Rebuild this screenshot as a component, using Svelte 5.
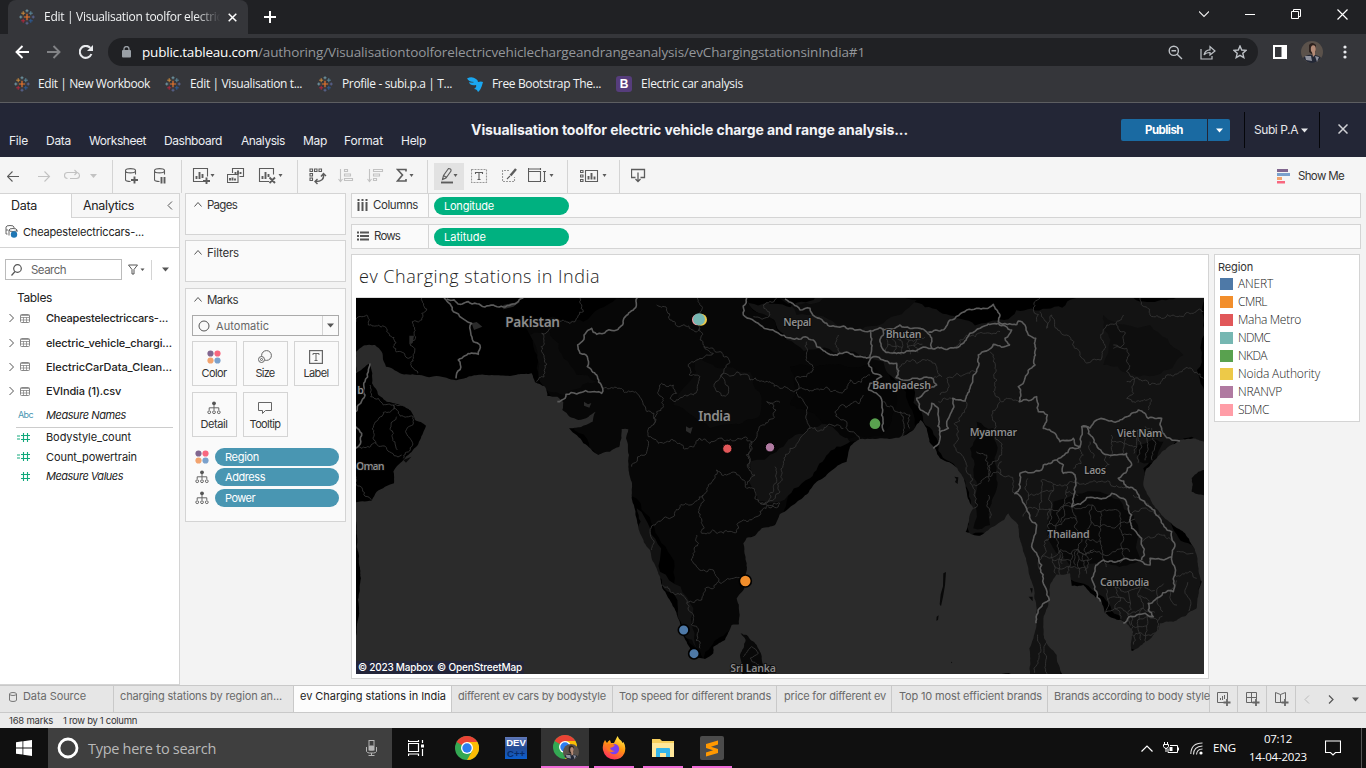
<script>
  // Spreads a label over the width of its slot by adjusting the tracking.
  function fit(node, width) {
    if (!width) return;
    const natural = node.getBoundingClientRect().width;
    const n = node.textContent.length;
    node.style.letterSpacing = `${(width - natural) / n}px`;
  }

  const bookmarks = [
    { icon: 'tableau', text: 'Edit | New Workbook', w: 112 },
    { icon: 'tableau', text: 'Edit | Visualisation t...', w: 112 },
    { icon: 'tableau', text: 'Profile - subi.p.a | T...', w: 110 },
    { icon: 'bird', text: 'Free Bootstrap The...', w: 109 },
    { icon: 'boot', text: 'Electric car analysis', w: 102 }
  ];
  const menus = [['File', 19], ['Data', 25], ['Worksheet', 57], ['Dashboard', 58], ['Analysis', 44], ['Map', 24], ['Format', 39], ['Help', 25]];
  const tables = [['Cheapestelectriccars-...', 122], ['electric_vehicle_chargi...', 126], ['ElectricCarData_Clean...', 126], ['EVIndia (1).csv', 75]];
  const legend = [
    ['ANERT', '#4e79a7', 35], ['CMRL', '#f28e2b', 29], ['Maha Metro', '#e15759', 63], ['NDMC', '#76b7b2', 32],
    ['NKDA', '#59a14f', 29], ['Noida Authority', '#edc948', 82], ['NRANVP', '#b07aa1', 44], ['SDMC', '#ff9da7', 31]
  ];
  const sheets = [
    ['charging stations by region an...', 162], ['ev Charging stations in India', 146, true], ['different ev cars by bodystyle', 148],
    ['Top speed for different brands', 152], ['price for different ev', 102], ['Top 10 most efficient brands', 143], ['Brands according to body style', 156]
  ];

  // Midpoint displacement turns sparse points into a natural looking line.
  function rough(str, amp = 0.16, step = 14, close = false) {
    const p = str.trim().split(/\s+/).map((s) => s.split(',').map(Number));
    if (close) p.push(p[0]);
    let seed = Math.abs(p[0][0] * 31 + p[0][1] * 17 + p.length * 101) + 7;
    const rnd = () => { seed = (seed * 16807) % 2147483647; return seed / 2147483647 - 0.5; };
    for (let i = 0; i < 5; i++) rnd();
    const out = [p[0]];
    const div = (a, b) => {
      const dx = b[0] - a[0], dy = b[1] - a[1];
      if (Math.hypot(dx, dy) < step) { out.push(b); return; }
      const k = rnd() * amp * 2;
      const m = [(a[0] + b[0]) / 2 - dy * k, (a[1] + b[1]) / 2 + dx * k];
      div(a, m); div(m, b);
    };
    for (let i = 1; i < p.length; i++) div(p[i - 1], p[i]);
    return 'M' + out.map((q) => q[0].toFixed(1) + ' ' + q[1].toFixed(1)).join('L') + (close ? 'Z' : '');
  }

  // Map geometry, three units to a pixel.
  const arabianAndBay = '18,170 40,152 75,150 95,170 108,215 150,235 200,240 260,243 318,256 350,248 425,240 480,243 545,235 555,262 585,275 592,303 622,305 640,322 637,345 660,366 685,375 715,366 737,350 728,380 690,397 657,400 700,445 745,480 780,470 808,455 815,402 835,403 828,430 837,480 835,515 845,560 845,600 858,665 870,715 900,765 915,810 930,845 937,880 965,925 990,985 1010,1040 1025,1080 1065,1092 1090,1075 1090,1055 1125,1035 1145,990 1167,988 1160,910 1183,880 1185,780 1180,745 1190,728 1215,722 1235,700 1275,690 1290,657 1340,622 1400,560 1440,530 1490,500 1500,455 1530,432 1590,430 1645,428 1690,405 1712,375 1730,400 1738,440 1770,490 1822,520 1838,545 1850,590 1870,640 1858,665 1847,710 1890,722 1920,700 1962,675 1975,655 2005,690 2018,760 2035,820 2052,880 2060,940 2058,1000 2038,1060 2040,1140 10,1140 10,625 65,617 80,590 105,575 132,565 130,530 160,495 180,475 210,435 228,392 195,375 180,345 110,320 85,300 66,265 60,205 18,235';
  const gulf = '2138,1140 2120,1080 2082,1030 2080,985 2095,930 2100,870 2120,838 2160,835 2165,872 2200,870 2230,900 2255,920 2265,955 2290,970 2330,985 2350,1010 2345,1068 2380,1045 2425,1005 2430,985 2470,980 2540,940 2555,860 2540,780 2505,715 2440,665 2400,610 2380,570 2390,520 2420,490 2455,455 2490,435 2530,430 2570,440 2570,1140';
  const shades = [
    ['1180,10 2570,10 2570,440 2480,435 2380,520 2440,660 2560,800 2540,960 2340,1060 2250,900 2150,840 2130,1137 2040,1137 1990,700 1860,720 1830,540 1720,380 1690,260 1500,200 1330,170', '#131313'],
    ['520,90 700,80 800,10 1180,10 1600,200 1700,400 1500,440 1290,670 1190,730 1180,980 1060,1092 1000,1010 830,520 740,480 600,300 560,220', '#070707'],
    ['860,640 900,700 930,830 1030,940 1040,1060 1000,1020 920,830 865,720', '#121212'],
    ['540,120 600,110 640,190 740,260 640,300 570,260', '#0b0b0b'],
    ['1200,500 1280,470 1450,380 1500,440 1380,550 1290,620 1220,620', '#121212'],
    ['1880,380 1930,400 1940,520 1920,690 1870,700 1880,560 1860,460', '#070707'],
    ['2110,620 2250,590 2350,660 2370,790 2200,820 2110,760', '#080808'],
    ['2360,450 2440,440 2420,500 2370,500', '#070707'],
    ['1320,215 1560,210 1640,300 1600,420 1470,420 1320,330', '#050505'],
    ['1040,190 1200,230 1230,360 1080,400 970,330', '#0b0b0b'],
    ['2260,60 2400,90 2500,180 2420,240 2260,210', '#0e0e0e'],
    ['1290,10 1500,10 1700,15 1600,85 1460,90 1340,60', '#0b0b0b']
  ];
  const major = [
    '282,9 310,50 365,85 370,140 390,150 385,178 345,182 325,195 318,250', '290,12 330,28 430,30 520,9',
    '862,9 850,45 820,75 800,105 740,118 725,100 710,110 683,150 690,175 712,185 712,215 740,240 758,280 755,295 735,290 680,297 648,298 645,310 622,320',
    '1190,9 1180,60 1230,90 1290,118 1340,130 1390,135 1400,155 1470,175 1520,185 1560,188 1563,140 1560,105',
    '1305,12 1350,45 1380,40 1395,65 1420,80 1460,95 1500,100 1560,108 1590,98 1600,105',
    '1600,100 1590,140 1600,165 1680,168 1745,160 1740,120 1710,100 1650,90 1600,105',
    '1735,112 1770,108 1800,75 1850,45 1880,40 1930,28 1950,60 1945,80 2000,90',
    '1745,160 1820,158 1850,130 1905,92 1945,85 1985,105 1965,130 1980,150',
    '2000,90 2005,78 2025,90 2035,120 2057,130 2055,210 2025,250 2005,275 2008,320 2060,305 2065,350 2092,360 2080,400 2115,415 2130,440 2170,430 2175,450 2190,455 2195,395 2220,400',
    '1980,150 1930,148 1885,180 1880,230 1860,280 1845,318 1808,310 1805,350 1795,400 1770,410 1765,340 1745,325 1735,360 1712,345 1700,310 1725,290 1760,270 1750,252 1638,248 1640,205 1600,195 1570,185 1555,205 1570,235 1595,245 1560,265 1556,285 1585,300 1595,360 1602,410',
    '1770,410 1768,440 1750,460',
    '2220,400 2240,375 2290,380 2330,365 2365,345 2395,370 2435,370 2435,405 2460,430 2490,438',
    '2195,395 2210,395 2230,430 2255,470 2300,480 2330,475 2345,510 2305,550 2360,590 2390,630 2430,670 2465,710 2475,750 2465,785 2400,790 2400,810 2340,795 2260,795 2235,820 2225,850 2240,890 2252,920',
    '2465,785 2475,840 2470,890 2415,915 2395,925 2395,945 2410,965 2360,960 2320,985',
    '2190,455 2160,460 2120,495 2080,510 2075,525 2010,535 2010,580 1995,595 2030,640 2060,690 2045,755 2075,810 2080,850 2098,915 2060,960 2058,985',
    '2120,495 2140,510 2140,535 2175,540 2175,590 2165,635 2210,608 2260,610 2285,595 2320,610 2345,660 2345,700 2375,730 2375,795',
    '60,205 55,230 45,260 45,300 25,330 18,350', '18,395 35,415 18,460'
  ];
  const minor = [
    '215,9 215,75 187,80 180,150 190,190 203,235', '18,80 50,60 55,90 110,110 130,155 185,185', '690,9 700,50 675,80 620,75 575,115 575,170 585,220 560,260',
    '920,30 950,40 960,75 990,95 1035,110 1050,100', '1042,9 1045,60', '1045,90 1060,150 1110,170 1135,190 1125,220 1110,250 1095,265 1100,290 1130,300 1125,260 1115,238 1200,255 1260,260 1290,280',
    '1060,155 1090,175 1050,190 1015,215 1018,240 1050,245 1045,265 1030,300 1000,305 975,320 960,310 980,295 970,270 935,265 940,310 920,350 910,390 895,425',
    '758,280 800,278 850,290 880,330 912,355 910,390', '895,425 940,445 990,445 1000,460 1050,430 1080,445 1120,435 1205,440', '890,435 885,480 850,505 845,515',
    '1290,322 1250,320 1278,345 1255,380 1228,395 1210,440 1195,520 1215,540 1190,570', '1205,440 1200,520', '1100,525 1095,550 1075,570 1060,600 1020,630 975,650 910,690 905,730 905,765', '1098,525 1130,540 1170,545 1190,580 1215,590 1230,625 1255,620 1290,590', '1275,515 1280,560 1260,610 1230,625 1290,625',
    '1060,600 1055,715 1120,715 1180,675 1230,660 1290,625', '1040,720 1035,770 1028,800 1045,820 1090,825 1105,850 1100,865 1060,895 1055,915 1010,925 960,890 937,870', '1105,860 1150,850 1185,845', '1010,925 1030,960 1045,1010 1050,1060',
    '1280,10 1240,30 1260,60 1210,65', '78,445 92,365 130,330 190,365 180,430 160,490', '18,455 78,445 155,480', '140,365 142,465', '18,545 65,615', '60,270 62,305 100,330 130,330 180,345',
    '1370,140 1375,200 1390,225 1340,245 1340,285 1290,280', '1470,175 1465,120', '1340,285 1460,290 1500,255 1560,240', '1340,290 1370,350 1380,400 1350,430 1320,460 1300,500 1290,590', '1540,300 1500,330 1455,350 1490,380 1500,410 1530,435', '1380,400 1430,395 1480,400',
    '1640,248 1650,215 1700,205 1760,215 1775,245 1745,252', '1600,320 1640,350 1650,430', '1650,350 1680,360 1680,400', '1770,300 1790,290 1790,250 1820,235 1850,235 1880,230', '1765,320 1805,310', '1820,160 1850,120 1900,115 1950,110',
    '1845,318 1835,360 1835,480 1870,580 1870,640', '1920,170 1935,220 1930,290 1960,320 2008,320', '1950,320 1925,360 1935,400 1955,480 1920,510 1915,560', '1880,470 1910,480 1920,545 1955,540 1995,600', '1870,570 1915,545', '1915,600 1920,670', '1955,500 1955,540',
    '2070,9 2060,80', '2070,50 2090,100 2105,60 2150,120 2180,160 2205,200 2250,195 2260,140 2300,80 2320,60', '2370,9 2400,60 2440,70 2500,65 2560,50', '2290,150 2330,160 2330,230 2350,270 2330,310 2400,310 2395,345', '2330,260 2400,270 2450,240 2560,250', '2300,85 2320,150 2290,160',
    '2230,490 2220,440', '2265,475 2260,540', '2170,520 2200,480 2190,455', '2180,560 2250,560 2330,580', '2345,655 2430,660', '2375,740 2465,735', '2480,770 2530,775', '2470,840 2540,850', '2400,640 2350,600'
  ];
  const provinces = (() => {
    // Irregular cells for the small provinces of Thailand, Cambodia and Viet Nam.
    const out = [];
    const cells = (x0, y0, x1, y1, s) => {
      for (let y = y0; y < y1; y += s) for (let x = x0; x < x1; x += s) {
        const j = Math.sin(x * 12.9 + y * 7.3) * s * 0.28, k = Math.cos(x * 5.1 + y * 3.7) * s * 0.28;
        const j2 = Math.sin((x + s) * 12.9 + y * 7.3) * s * 0.28, k2 = Math.cos((x + s) * 5.1 + y * 3.7) * s * 0.28;
        const j3 = Math.sin(x * 12.9 + (y + s) * 7.3) * s * 0.28, k3 = Math.cos(x * 5.1 + (y + s) * 3.7) * s * 0.28;
        if ((x + y * 3) % 5 !== 0) out.push(`${x + j},${y + k} ${x + s + j2},${y + k2}`);
        out.push(`${x + j},${y + k} ${x + j3},${y + s + k3}`);
      }
    };
    cells(2025, 560, 2150, 640, 38); cells(2085, 640, 2340, 780, 44); cells(2110, 770, 2220, 820, 24);
    cells(2270, 880, 2400, 950, 34); cells(2345, 970, 2420, 1040, 24); cells(2430, 860, 2520, 930, 40);
    cells(2370, 400, 2420, 500, 20); cells(1610, 130, 1720, 158, 22); cells(2275, 410, 2380, 470, 38); cells(2060, 1020, 2110, 1120, 30);
    cells(1190, 1060, 1235, 1120, 26);
    return out;
  })();
  const labels = [
    ['Pakistan', 466, 95, 164, 41], ['India', 1045, 379, 97, 41], ['Nepal', 1300, 93, 84, 32], ['Bhutan', 1607, 129, 108, 32], ['Bangladesh', 1567, 282, 176, 32],
    ['Myanmar', 1859, 424, 142, 32], ['Viet Nam', 2301, 427, 136, 32], ['Laos', 2202, 536, 66, 32], ['Thailand', 2092, 729, 127, 32], ['Cambodia', 2250, 874, 148, 32],
    ['Oman', 18, 524, 86, 32], ['b', 22, 297, 17, 32], ['Sri Lanka', 1141, 1132, 137, 32]
  ];
  const marks = [
    [1043, 74, 17, '#ff9da7', 0], [1053, 74, 18, '#edc948', 0], [1047, 73, 18, '#76b7b2', 0], [1132, 461, 14, '#e15759', 3], [1260, 457, 14, '#b07aa1', 3],
    [1575, 386, 16, '#59a14f', 0], [1186, 858, 18, '#f28e2b', 5], [1001, 1005, 16, '#4e79a7', 5], [1032, 1076, 16, '#4e79a7', 5]
  ];
</script>

{#snippet t(text, w, cls = '')}<span class="t {cls}" use:fit={w}>{text}</span>{/snippet}

{#snippet tableau()}
  <svg width="16" height="16" viewBox="0 0 16 16" fill="none" stroke-width="1">
    <path d="M8 4.800v6.400M4.800 8h6.400" stroke="#e8762d" stroke-width="1.200" /><path d="M4.200 2.200v4M2.200 4.200h4" stroke="#c98a3c" /><path d="M11.800 2.200v4M9.800 4.200h4" stroke="#59879b" />
    <path d="M4.200 9.800v4M2.200 11.800h4" stroke="#b0283c" /><path d="M11.800 9.800v4M9.800 11.800h4" stroke="#2c5a96" /><path d="M8 .3v3M6.500 1.800h3M1.800 6.500v3M.3 8h3" stroke="#7199a6" /><path d="M8 12.700v3M6.500 14.200h3M14.200 6.500v3M12.700 8h3" stroke="#5b6591" />
  </svg>
{/snippet}

{#snippet dots()}
  <svg width="14" height="14" viewBox="0 0 14 14"><circle cx="3.500" cy="3.500" r="3.100" fill="#81668f" /><circle cx="10.500" cy="3.500" r="3.100" fill="#f8677f" /><circle cx="3.500" cy="10.500" r="3.100" fill="#f2a36e" /><circle cx="10.500" cy="10.500" r="3.100" fill="#7ba1cc" /></svg>
{/snippet}

{#snippet tree()}
  <svg width="14" height="14" viewBox="0 0 14 14" fill="none" stroke="#666"><circle cx="7" cy="2.300" r="1.900" fill="#555" stroke="none" /><path d="M7 4v5M2.200 9V6.800h9.600V9" /><circle cx="2.200" cy="11.200" r="1.400" /><circle cx="7" cy="11.200" r="1.400" /><circle cx="11.800" cy="11.200" r="1.400" /></svg>
{/snippet}

{#snippet chrome()}
  <svg width="24" height="24" viewBox="0 0 24 24"><circle cx="12" cy="12" r="12" fill="#34a853" /><path d="M12 12L1.600 6A12 12 0 0 1 22.400 6z" fill="#ea4335" /><path d="M12 6h10.400A12 12 0 0 1 12 24l5.200-9z" fill="#fbbc05" /><circle cx="12" cy="12" r="6" fill="#fff" /><circle cx="12" cy="12" r="4.700" fill="#2c7df0" /></svg>
{/snippet}

{#snippet portrait(s)}
  <svg width={s} height={s} viewBox="0 0 22 22"><circle cx="11" cy="11" r="11" fill="#5b524b" /><path d="M2 17q5-4 8-3l4 0q5 1 6 3q-4 5-9 5t-9-5" fill="#232836" /><path d="M4 15l6 0 1 5-6-1zM14 15l4 1-2 5z" fill="#8f919c" /><path d="M8 11V4q3-4 7 0v6l-3 4z" fill="#2c211e" /><ellipse cx="12.300" cy="8" rx="2.500" ry="3.800" fill="#b48b77" /><path d="M11 11h3v3l-2 2z" fill="#b48b77" /></svg>
{/snippet}

{#snippet caret()}<svg class="caret" width="7" height="5" viewBox="0 0 7 5"><path d="M0 .5h7L3.500 4.500z" /></svg>{/snippet}

<div class="app">
  <div class="strip">
    <div class="tab">
      {@render tableau()}
      <div class="tabtext">{@render t('Edit | Visualisation toolfor electric', 178, 'chr')}</div>
      <svg width="9" height="9" viewBox="0 0 9 9" stroke="#fff" stroke-width="1.500"><path d="M.7.7l7.600 7.600M8.300.7L.7 8.300" /></svg>
    </div>
    <svg class="plus" width="12" height="12" viewBox="0 0 12 12" stroke="#fff" stroke-width="2"><path d="M6 0v12M0 6h12" /></svg>
    <div class="winbtns">
      <svg width="10" height="10" viewBox="0 0 10 10" fill="none" stroke="#eee" stroke-width="1.100"><path d="M0 2.500l5 5 5-5" /></svg>
      <svg width="10" height="10" viewBox="0 0 10 10" stroke="#fff"><path d="M0 5.500h10" /></svg>
      <svg width="10" height="10" viewBox="0 0 10 10" fill="none" stroke="#fff"><path d="M.5 2.500h7v7h-7zM2.500 2.500v-2h7v7h-2" /></svg>
      <svg width="11" height="11" viewBox="0 0 11 11" stroke="#fff" stroke-width="1.200"><path d="M.5.5l10 10M10.500.5l-10 10" /></svg>
    </div>
  </div>

  <div class="nav">
    <svg width="14" height="14" viewBox="0 0 14 14" fill="none" stroke="#fff" stroke-width="1.900"><path d="M14 7H1.500M7.500 1L1.500 7l6 6" /></svg>
    <svg width="14" height="14" viewBox="0 0 14 14" fill="none" stroke="#828386" stroke-width="1.900"><path d="M0 7h12.500M6.500 1l6 6-6 6" /></svg>
    <svg width="14" height="14" viewBox="0 0 14 14" fill="none" stroke="#e8eaed" stroke-width="2.100"><path d="M12.400 9A6 6 0 1 1 11.300 2.900" /><path d="M14 0v6H8z" fill="#e8eaed" stroke="none" /></svg>
    <div class="omni">
      <svg width="9" height="12" viewBox="0 0 9 12"><path d="M2 5V3a2.500 2.500 0 0 1 5 0v2" fill="none" stroke="#9aa0a6" stroke-width="1.300" /><rect y="4" width="9" height="7.500" rx="1" fill="#9aa0a6" /></svg>
      <div class="url">{@render t('public.tableau.com', 116, 'host')}{@render t('/authoring/Visualisationtoolforelectricvehiclechargeandrangeanalysis/evChargingstationsinIndia#1', 607, 'path')}</div>
      <div class="omniicons">
        <svg width="15" height="15" viewBox="0 0 15 15" fill="none" stroke="#bdc1c6" stroke-width="1.400"><circle cx="5.800" cy="5.800" r="4.600" /><path d="M3.500 5.800h4.600M9.200 9.200l4.800 4.800" /></svg>
        <svg width="16" height="15" viewBox="0 0 16 15" fill="none" stroke="#bdc1c6" stroke-width="1.200"><path d="M1 4v10h11v-3M4 10q1-5 6-5.200V1.500l5 4.500-5 4V7.500Q6 7.500 4 10z" /></svg>
        <svg width="14" height="14" viewBox="0 0 14 14" fill="none" stroke="#bdc1c6" stroke-width="1.400"><path d="M7 1l1.700 4 4.400.4-3.300 2.900 1 4.300L7 10.300l-3.800 2.300 1-4.300L.9 5.400 5.300 5z" /></svg>
      </div>
    </div>
    <div class="exticons">
      <svg width="14" height="14" viewBox="0 0 14 14"><path d="M0 0h14v14H0zM2 2v10h6.500V2z" fill="#fff" fill-rule="evenodd" /></svg>
      {@render portrait(22)}
      <svg width="4" height="14" viewBox="0 0 4 14" fill="#e8eaed"><circle cx="2" cy="2" r="1.600" /><circle cx="2" cy="7" r="1.600" /><circle cx="2" cy="12" r="1.600" /></svg>
    </div>
  </div>

  <div class="marksbar">
    {#each bookmarks as b}
      <div class="bm">
        {#if b.icon === 'tableau'}{@render tableau()}
        {:else if b.icon === 'bird'}<svg width="16" height="16" viewBox="0 0 16 16" fill="#1aa7f0"><path d="M0 2.500Q5 0 9 3q2 1 2 3 3-1 5 0-2 8-5 10-1-3-4-3 3-2 2-4-6 1-7-3 3 1 5 0-5 0-7-3.500z" /></svg>
        {:else}<div class="boot">B</div>{/if}
        {@render t(b.text, b.w, 'chr')}
      </div>
    {/each}
  </div>

  <header>
    <div class="menus">{#each menus as m}{@render t(m[0], m[1])}{/each}</div>
    <div class="wbtitle">{@render t('Visualisation toolfor electric vehicle charge and range analysis...', 437)}</div>
    <div class="publish"><b>{@render t('Publish', 38)}</b><i>{@render caret()}</i></div>
    <div class="user">{@render t('Subi P.A', 44)}{@render caret()}</div>
    <svg class="close" width="10" height="10" viewBox="0 0 10 10" stroke="#d0d1d5" stroke-width="1.500"><path d="M.5.5l9 9M9.500.5l-9 9" /></svg>
  </header>

  <div class="tools">
    <svg class="ic" viewBox="0 0 18 18"><path d="M13 9.500H1.500M6.500 4.500l-5 5 5 5" transform="translate(-1 0)" /></svg>
    <svg class="ic dim" viewBox="0 0 18 18"><path d="M0 9.500h11.500M6.500 4.500l5 5-5 5" /></svg>
    <svg class="ic dim" viewBox="0 0 18 18"><path d="M3.500 11.500Q.5 11.500.5 8.500t3-3H13M10.500 3L13 5.500 10.500 8M6 11.500h6.500q3 0 3-3 0-2-2-3" /></svg>
    <svg class="ic dim" viewBox="0 0 18 18"><path d="M0 7h7l-3.500 4z" class="f" /></svg>
    <s></s>
    <svg class="ic" viewBox="0 0 18 18"><path d="M10.500 7.500v-4C10.500 1 .5 1 .5 3.500v9c0 2 3 2 5 2M.5 4c0 2.500 10 2.500 10 0" /><path d="M9.500 9.500v7M6 13h7" class="b" /></svg>
    <svg class="ic" viewBox="0 0 18 18"><path d="M10.500 7.500v-4C10.500 1 .5 1 .5 3.500v9c0 2 3 2 5 2M.5 4c0 2.500 10 2.500 10 0" /><path d="M7.500 10v6.500M10.500 10v6.500" class="b" /></svg>
    <s></s>
    <svg class="ic w" viewBox="0 0 24 18"><path d="M11 14.500H1.500v-13h14v8" /><path d="M4.500 9v3M7.500 5v7M10.500 7v4" class="b" /><path d="M14.500 10.500v6.500M11 14h7" class="b" /><path d="M18.500 7h4l-2 3z" class="f" /></svg>
    <svg class="ic" viewBox="0 0 18 18"><path d="M5.500 6V1.500h11v8h-4M.5 7.500h10.500v8H.5z" /><path d="M8.500 5v2M11 3.500v4M13.500 5v2M3 11v2.500M5.500 10.500v3M8 11.500v2" class="b" /></svg>
    <svg class="ic w" viewBox="0 0 26 18"><path d="M11 14.500H1.500v-13h14v6" /><path d="M4.500 9v3M7.500 5v7M10.500 7v3M11.500 10.500l5.500 5.500M17 10.500L11.500 16" class="b" /><path d="M20.500 7h4l-2 3z" class="f" /></svg>
    <s></s>
    <svg class="ic" viewBox="0 0 18 18"><path d="M1 2h2.500v2.500H1zM5.500 2H8v2.500H5.500zM10 2h2.500v2.500H10zM1 6.500h2.500V9H1zM1 11h2.500v2.500H1z" /><path d="M14.500 7.500q1 7-8 7M12 9.500l2.500-3L17 9M8.500 12L6 14.500 8.500 17" stroke-width="1.400" /></svg>
    <svg class="ic dim" viewBox="0 0 18 18"><path d="M2.500 2v12M.5 12l2 2.500 2-2.500M6.500 2.500h3v2h-3zM6.500 7h6v2h-6zM6.500 11.500h8v2h-8z" /></svg>
    <svg class="ic dim" viewBox="0 0 18 18"><path d="M2.500 2v12M.5 12l2 2.500 2-2.500M6.500 2.500h9v2h-9zM6.500 7h6v2h-6zM6.500 11.500h3v2h-3z" /></svg>
    <svg class="ic" viewBox="0 0 18 18"><path d="M10 4.500V2.500H1.500L6.500 8l-5 6H10v-2" stroke-width="1.600" /><path d="M13.500 7h4l-2 3z" class="f" /></svg>
    <s></s>
    <div class="pen"><svg class="ic w" viewBox="0 0 24 18"><path d="M2 15.500h12" class="b" /><path d="M3.500 12.500l1-4 5-7q3 0 2.500 2.500l-5 7zM4.500 8.500l3 2" /><path d="M14.500 7h4l-2 3z" class="f" /></svg></div>
    <svg class="ic" viewBox="0 0 18 18"><path d="M.5 2.500h15v13H.5z" stroke-dasharray="2 1" class="l" /><path d="M4.500 7V5.500h7V7M8 5.500V12M6.500 12.500h3" /></svg>
    <svg class="ic" viewBox="0 0 18 18"><path d="M7 3.500H.5v11h12V10" stroke-dasharray="2 1" class="l" /><path d="M14 2L8.500 8.500" stroke-width="2.400" /><path d="M8 9L5 12" /></svg>
    <svg class="ic w" viewBox="0 0 28 18"><path d="M.5 4.500h12v10H.5zM.5 1v3M12.500 1v2M1 2h11M15 4.500h3M15 14.500h3M16.500 5v9" /><path d="M21.500 7h4l-2 3z" class="f" /></svg>
    <s></s>
    <svg class="ic w" viewBox="0 0 28 18"><path d="M5.500 3.500h12v11h-12zM.5 3.500H3v2H.5zM.5 8H3v2H.5zM.5 12.500H3v2H.5z" /><path d="M8.500 9v3.500M11.500 6v6.500M14.500 9.500v3" class="b" /><path d="M22.500 7h4l-2 3z" class="f" /></svg>
    <s></s>
    <svg class="ic" viewBox="0 0 18 18"><path d="M4.500 10.500h-4v-8h13v8h-4M7 5.500v9M4.500 12L7 14.500 9.500 12" stroke-width="1.300" /></svg>
    <div class="showme"><svg width="14" height="15" viewBox="0 0 14 15"><path d="M0 0h11v3H0z" fill="#81668f" /><path d="M0 4h13v3H0z" fill="#7ba1cc" /><path d="M0 8h5v3H0z" fill="#f2a36e" /><path d="M0 12h8v2.500H0z" fill="#f8677f" /></svg>{@render t('Show Me', 46)}</div>
  </div>

  <main>
    <aside class="data">
      <div class="dtabs"><div class="on">{@render t('Data', 26)}</div><div class="off">{@render t('Analytics', 51)}<svg width="6" height="9" viewBox="0 0 6 9" fill="none" stroke="#555"><path d="M5 .5l-4 4 4 4" /></svg></div></div>
      <div class="source"><svg width="13" height="13" viewBox="0 0 13 13" fill="none" stroke="#666"><path d="M2.500 9H1V2q0-1.500 4-1.500T9 2v1M4 10.500V5q0-1.500 4-1.500t4 1.500v2M4 5q0 1.500 4 1.500t4-1.500M1 5h2" /><circle cx="9" cy="9.500" r="3.200" fill="#1f77b4" stroke="none" /></svg>{@render t('Cheapestelectriccars-...', 121)}</div>
      <div class="searchrow">
        <div class="search"><svg width="11" height="12" viewBox="0 0 11 12" fill="none" stroke="#555" stroke-width="1.200"><circle cx="6.500" cy="4.500" r="3.800" /><path d="M4 7.500L.5 11.500" /></svg>{@render t('Search', 35)}</div>
        <svg width="17" height="11" viewBox="0 0 17 11" fill="none" stroke="#555"><path d="M.5 1h9L6 5.500v4.500H4V5.500z" /><path d="M12.500 4.500h4L14.500 7z" fill="#555" stroke="none" /></svg>
        <u></u>{@render caret()}
      </div>
      <div class="tables">{@render t('Tables', 35)}</div>
      <div class="list">
        {#each tables as row}
          <div class="trow"><svg width="5" height="8" viewBox="0 0 5 8" fill="none" stroke="#555"><path d="M.5 0l4 4-4 4" /></svg><svg width="10" height="9" viewBox="0 0 10 9" fill="none" stroke="#888"><rect x=".5" y=".5" width="9" height="8" rx="1" /><path d="M.5 1.500h9M.5 3.500h9M.5 6h9M3.500 3v5M6.500 3v5" stroke-width=".8" /></svg>{@render t(row[0], row[1])}</div>
        {/each}
      </div>
      <div class="mrow names-row"><span class="abc">{@render t('Abc', 15)}</span>{@render t('Measure Names', 80, 'it')}</div>
      {#each [['Bodystyle_count', 85, 1], ['Count_powertrain', 91, 1], ['Measure Values', 77, 0]] as m}
        <div class="mrow"><svg width="14" height="11" viewBox="0 0 14 11" fill="none" stroke="#12a97c"><path d="M6.500 1v9M10.500 1v9M4 3.500h9M4 7.500h9" stroke-width="1.100" />{#if m[2]}<path d="M0 4h3M0 7h3" />{/if}</svg>{@render t(m[0], m[1], m[2] ? '' : 'it')}</div>
      {/each}
    </aside>

    <div class="cards">
      {#each [['Pages', 30], ['Filters', 32]] as c}
        <div class="card"><div class="ch"><svg width="8" height="5" viewBox="0 0 8 5" fill="none" stroke="#555"><path d="M.5 4.500l3.500-4 3.500 4" /></svg>{@render t(c[0], c[1])}</div></div>
      {/each}
      <div class="card big">
        <div class="ch"><svg width="8" height="5" viewBox="0 0 8 5" fill="none" stroke="#555"><path d="M.5 4.500l3.500-4 3.500 4" /></svg>{@render t('Marks', 31)}</div>
        <div class="select"><svg width="12" height="12" viewBox="0 0 12 12" fill="none" stroke="#555"><circle cx="6" cy="6" r="5" /></svg>{@render t('Automatic', 53)}<i>{@render caret()}</i></div>
        <div class="btns">
          <div>{@render dots()}{@render t('Color', 25)}</div>
          <div><svg width="14" height="14" viewBox="0 0 14 14" fill="none" stroke="#666"><circle cx="8.500" cy="5.500" r="4.900" /><circle cx="3.500" cy="9.500" r="3" fill="#fafafa" /><circle cx="3.500" cy="9.500" r="1" /></svg>{@render t('Size', 19)}</div>
          <div><svg width="14" height="14" viewBox="0 0 14 14" fill="none" stroke="#666"><rect x=".6" y=".6" width="12.800" height="12.800" stroke-width="1.200" /><path d="M4 5V3.500h6V5M7 3.500v7M5.500 10.500h3" /></svg>{@render t('Label', 25)}</div>
          <div>{@render tree()}{@render t('Detail', 27)}</div>
          <div><svg width="14" height="14" viewBox="0 0 14 14" fill="none" stroke="#666"><path d="M.5 1.500h13v8H7.500l-3 3v-3h-4z" /></svg>{@render t('Tooltip', 31)}</div>
        </div>
        <div class="pills">
          {@render dots()}<div class="pill">{@render t('Region', 34)}</div>
          {@render tree()}<div class="pill">{@render t('Address', 40)}</div>
          {@render tree()}<div class="pill">{@render t('Power', 30)}</div>
        </div>
      </div>
    </div>

    <section>
      <div class="shelf"><div class="sl"><svg width="11" height="12" viewBox="0 0 11 12" stroke="#555" stroke-width="2"><path d="M1.500 0v2M5.500 0v2M9.500 0v2M1.500 3v9M5.500 3v9M9.500 3v9" /></svg>{@render t('Columns', 45)}</div><div class="pill green">{@render t('Longitude', 50)}</div></div>
      <div class="shelf"><div class="sl"><svg width="12" height="10" viewBox="0 0 12 10" stroke="#555" stroke-width="2"><path d="M0 1.500h2M0 5h2M0 8.500h2M3 1.500h9M3 5h9M3 8.500h9" /></svg>{@render t('Rows', 26)}</div><div class="pill green">{@render t('Latitude', 42)}</div></div>
      <div class="viewrow">
        <div class="view">
          <div class="vtitle">{@render t('ev Charging stations in India', 241)}</div>
          <div class="map">
            <svg class="mapsvg" viewBox="18 9 2544 1128" preserveAspectRatio="none">
              <rect x="18" y="9" width="2544" height="1128" fill="#000" />
              <g>{#each shades as s}<path d={rough(s[0], 0.15, 20, true)} fill={s[1]} />{/each}</g>
              <g class="thin">{#each minor as m}<path d={rough(m, 0.28, 7)} />{/each}{#each provinces as m}<path d={rough(m, 0.25, 9)} />{/each}</g>
              <g fill="#2b2b2b"><path d={rough(arabianAndBay, 0.07, 8, true)} /><path d={rough(gulf, 0.08, 8, true)} />
                <path d="M460 30l50-10-20 15-30 8zM365 85l15-4 17 14-25 10zM178 122h14l-4 22-10 4zM702 320l12 8 10-4-6 14-16-6zM1008 394l10 6 10-4-6 20-14-8z" /></g>
              <g fill="#090909"><path d={rough('1172,1015 1190,1020 1220,1050 1235,1090 1255,1140 1175,1140 1170,1080 1187,1035', 0.1, 8, true)} /><path d={rough('2570,525 2545,530 2525,550 2525,590 2570,602', 0.1, 8, true)} />
                <path d="M1780 835l8-4-3 40-6 35-6 28-4-6 3-30 7-24zM1760 965l6-4-2 14-5 2zM1813 545l12 2-2 20-8-6 4-8zM2040 880l8 0-2 16zM2036 905l12 0 0 14zM160 495l24-10-16 18zM1803 1100l4 2-3 3z" /></g>
              <g class="thin"><path d={rough('1180,1085 1205,1055 1225,1075 1200,1090 1230,1115 1200,1125', 0.2, 8)} /></g>
              <g class="thick">{#each major as m}<path d={rough(m, 0.17, 9)} />{/each}</g>
              <g class="names">{#each labels as l}<text x={l[1]} y={l[2]} font-size={l[4]} textLength={l[3]}>{l[0]}</text>{/each}</g>
              {#each marks as m}<circle cx={m[0]} cy={m[1]} r={m[2]} fill={m[3]} stroke="#000" stroke-width={m[4]} />{/each}
            </svg>
            <div class="credit">{@render t('© 2023 Mapbox', 75)}{@render t('© OpenStreetMap', 85)}</div>
          </div>
        </div>
        <div class="legend">
          {@render t('Region', 35)}
          {#each legend as l}<div class="lrow"><svg width="13" height="12"><rect width="13" height="12" fill={l[1]} /></svg>{@render t(l[0], l[2])}</div>{/each}
        </div>
      </div>
    </section>
  </main>

  <div class="sheets">
    <div class="sheet"><svg width="8" height="10" viewBox="0 0 8 10" fill="none" stroke="#777"><path d="M.5 2v6q0 1.500 3.500 1.500T7.500 8V2M.5 2Q.5.5 4 .5T7.500 2 4 3.500.5 2" /></svg>{@render t('Data Source', 63)}</div>
    {#each sheets as s}<div class="sheet" class:cur={s[2]}>{@render t(s[0], s[1])}</div>{/each}
    <div class="nb"><svg width="14" height="15" viewBox="0 0 14 15"><path d="M8 10.500H.5V.5h10V7M3.500 6v2M5.500 4v4M7.500 3v4" /><path d="M10 7v7M6.500 10.500h7" class="b" /></svg></div>
    <div class="nb"><svg width="14" height="15" viewBox="0 0 14 15"><path d="M8 10.500H.5V.5h10V7M5.500.5v10M.5 5.500h10" /><path d="M10 7v7M6.500 10.500h7" class="b" /></svg></div>
    <div class="nb"><svg width="14" height="15" viewBox="0 0 14 15"><path d="M8 10.500H.5V.500l5 2 5-2V7M5.500 2.500v8" /><path d="M10 7v7M6.500 10.500h7" class="b" /></svg></div>
    <div class="nav2"><svg width="6" height="9" viewBox="0 0 6 9" fill="none" stroke="#bbb"><path d="M5 .5l-4 4 4 4" /></svg><svg width="6" height="9" viewBox="0 0 6 9" fill="none" stroke="#555" stroke-width="1.200"><path d="M1 .5l4 4-4 4" /></svg>{@render caret()}</div>
  </div>
  <div class="status">{@render t('168 marks', 44)}{@render t('1 row by 1 column', 74)}</div>

  <footer>
    <div class="start"><svg width="16" height="16" viewBox="0 0 16 16" fill="#fff"><path d="M0 2.200L6.500 1.300v6.200H0zM7.300 1.200L16 0v7.500H7.300zM0 8.400h6.500v6.200L0 13.700zM7.300 8.400H16V16l-8.700-1.300z" /></svg></div>
    <div class="find"><svg width="22" height="22" viewBox="0 0 22 22" fill="none" stroke="#fff" stroke-width="2.800"><circle cx="11" cy="11" r="9" /></svg>{@render t('Type here to search', 128)}<svg class="mic" width="11" height="16" viewBox="0 0 11 16" fill="none" stroke="#b5b5b5"><rect x="3" y=".5" width="5" height="9.500" /><path d="M3.500 6h4v4h-4z" fill="#b5b5b5" /><path d="M.5 7v4.500q1 1.500 3 1.500h4q2 0 3-1.500V7M5.500 13v2.500M2.500 15.500h6" /></svg></div>
    <div class="app-i"><svg width="16" height="16" viewBox="0 0 16 16" fill="none" stroke="#fff"><path d="M.5 3.500h10v8H.5zM.5 0v1.500h10V0M.5 16v-2h10v2M14.500 0v3M14.500 9v7" stroke-width="1.200" /><path d="M13 4.500h3v3h-3z" fill="#fff" stroke="none" /></svg></div>
    <div class="app-i">{@render chrome()}</div>
    <div class="app-i"><div class="dev"><b>DEV</b><b class="cpp">C++</b></div></div>
    <div class="app-i act">{@render chrome()}<span class="badge">{@render portrait(16)}</span></div>
    <div class="app-i run"><svg width="24" height="24" viewBox="0 0 24 24"><defs><linearGradient id="fx" x1=".8" y1="0" x2=".3" y2="1"><stop offset="0" stop-color="#fff44f" /><stop offset=".45" stop-color="#ff980e" /><stop offset="1" stop-color="#ff2a5f" /></linearGradient></defs><path d="M1 14Q0 8 3 4l2 3q1-2 3-3l1 3 3 0q2-4 3.500-7 1 3 4 5l1 2 1-1q3 5 1 11-3 6.500-10 6.500Q3 23 1 14z" fill="url(#fx)" /><circle cx="12" cy="13" r="5.200" fill="#7b3ff0" /><path d="M5 8q5-1 8 1-2 3-5 3 1 3 5 3-6 3-8-2z" fill="#ff7a1e" /></svg></div>
    <div class="app-i run"><svg width="22" height="20" viewBox="0 0 22 20"><path d="M0 1h8l2 2h12v15H0z" fill="#f7cf5d" /><path d="M0 5h22v14H0z" fill="#ffe79a" /><path d="M4 19v-8q0-1 1-1h12q1 0 1 1v8h-4v-4H8v4z" fill="#35b5ea" /></svg></div>
    <div class="app-i run"><svg width="24" height="24" viewBox="0 0 24 24"><rect width="24" height="24" rx="2" fill="#4b4b4b" /><path d="M18 4.500v4l-7 2.300 7 2.300v4L6 20.500v-4l7-2.300-7-2.300v-4z" fill="#ff9800" /></svg></div>
    <div class="tray">
      <svg width="12" height="7" viewBox="0 0 12 7" fill="none" stroke="#fff" stroke-width="1.200"><path d="M.5 6.500L6 1l5.500 5.500" /></svg>
      <svg width="16" height="12" viewBox="0 0 16 12" fill="none" stroke="#fff"><path d="M7 3.500h7.500v7h-9.500v-4M15.500 5.500v3M1.500 0v2M4.500 0v2M.5 2.500h5v2q-1 2-2.500 2T.5 4.500zM3 6v4" /><path d="M6.500 5h3v4h-3z" fill="#fff" stroke="none" /></svg>
      <svg width="13" height="13" viewBox="0 0 13 13" fill="none" stroke="#ddd" stroke-width="1.100"><path d="M.8 12Q1 1 12.500 1M3.500 12.500q0-8 9-8.500M6.500 12.500Q7 7 12.500 7" /><circle cx="11" cy="11" r="1.600" fill="#fff" stroke="none" /></svg>
      {@render t('ENG', 23)}
      <div class="clock">{@render t('07:12', 28)}{@render t('14-04-2023', 58)}</div>
      <svg width="16" height="16" viewBox="0 0 16 16" fill="none" stroke="#fff" stroke-width="1.100"><path d="M.5 1h15v11.500h-5L8 15l-2.500-2.500h-5z" /></svg>
    </div>
  </footer>
</div>

<style>
  :global(body) { background: #f3f3f3; overflow: hidden; }
  .app { width: 1366px; height: 768px; overflow: hidden; display: flex; flex-direction: column; font: 11px/14px Inter, "Liberation Sans", sans-serif; color: #333; }
  .app * { box-sizing: border-box; }
  svg { flex: none; display: block; }
  .t { white-space: pre; flex: none; display: inline-block; justify-self: start; }
  .caret { fill: #555; }

  .strip { height: 34px; background: #202124; display: flex; align-items: center; flex: none; padding-left: 8px; }
  .tab { width: 240px; height: 34px; background: #35363a; border-radius: 8px 8px 0 0; display: flex; align-items: center; padding-left: 11px; }
  .tabtext { width: 180px; margin-left: 9px; margin-right: 4px; height: 16px; display: flex; -webkit-mask-image: linear-gradient(90deg, #000 84%, transparent 98%); mask-image: linear-gradient(90deg, #000 84%, transparent 98%); }
  .chr { font: 12px/16px "Open Sans", "Noto Sans", sans-serif; color: #f1f3f4; }
  .plus { margin-left: 16px; }
  .winbtns { margin-left: auto; display: flex; gap: 36px; padding-right: 18px; padding-bottom: 5px; }

  .nav { height: 36px; background: #35363a; display: flex; align-items: center; padding-left: 15px; gap: 18px; flex: none; }
  .omni { height: 28px; width: 1150px; border-radius: 14px; background: #202124; display: flex; align-items: center; padding-left: 14px; margin-left: -3px; }
  .url { margin-left: 11px; display: flex; font: 13.5px/18px "Open Sans", "Noto Sans", sans-serif; }
  .host { color: #fff; }
  .path { color: #94979b; }
  .omniicons { display: flex; gap: 17px; margin-left: auto; padding-right: 11px; align-items: center; }
  .exticons { display: flex; align-items: center; gap: 14px; margin-left: -3px; }
  .exticons svg:last-child { margin-left: 6px; }

  .marksbar { height: 33px; background: #35363a; border-bottom: 1px solid #5d5e61; display: flex; padding: 0 0 4px 14px; gap: 15px; align-items: center; flex: none; }
  .bm { display: flex; align-items: center; gap: 8px; }
  .bm:nth-child(n + 2) { gap: 9px; }
  .boot { width: 16px; height: 16px; border-radius: 3px; background: #563d7c; color: #fff; font: bold 12px/16px "Liberation Sans", sans-serif; text-align: center; }

  header { height: 54px; background: #232636; flex: none; display: grid; grid-template-columns: 471px 650px 123px 76px 1fr; align-items: center; }
  .menus { display: grid; grid-template-columns: 37px 43px 75px 77px 62px 41px 57px 40px; padding: 22px 0 0 9px; color: #eceef2; font-size: 12px; }
  .wbtitle { font-size: 14px; line-height: 18px; font-weight: 700; color: #f2f3f6; }
  .publish { width: 109px; height: 22px; display: flex; gap: 1px; }
  .publish b { width: 86px; background: #1a6aa2; color: #fff; font-size: 11.5px; line-height: 22px; text-align: center; border-radius: 2px 0 0 2px; }
  .publish i { flex: 1; background: #1a6aa2; display: grid; place-items: center; border-radius: 0 2px 2px 0; }
  .publish .caret { fill: #fff; }
  .user { height: 36px; border-left: 1px solid #05060a; border-right: 1px solid #05060a; display: flex; align-items: center; padding-left: 9px; gap: 3px; font-size: 12px; color: #e6e7ea; }
  .user .caret { fill: #e6e7ea; }
  .close { margin-left: 18px; margin-bottom: 2px; }

  .tools { height: 36px; background: #f5f5f5; flex: none; display: grid; align-items: center; padding: 2px 0 0 7px;
    grid-template-columns: 31px 26px 26px 22px 13px 29px 27px 11px 35px 31px 39px 12px 29px 29px 29px 31px 7px 37px 31px 26px 39px 13px 39px 12px 646px 1fr; }
  .tools > s { width: 1px; height: 33px; background: #d4d4d4; align-self: end; }
  .ic { width: 18px; height: 18px; fill: none; stroke: #5c5c5c; stroke-width: 1.1; }
  .ic.w { width: auto; height: 18px; justify-self: start; }
  .ic .b { stroke-width: 1.9; }
  .ic .l { stroke: #999; }
  .ic .f { fill: #5c5c5c; stroke: none; }
  .ic.dim { stroke: #c2c2c2; }
  .ic.dim .f { fill: #c2c2c2; }
  .pen { width: 30px; height: 27px; background: #e2e2e2; display: flex; align-items: center; padding-left: 5px; }
  .showme { display: flex; align-items: center; gap: 7px; font-size: 11.5px; }

  main { height: 492px; flex: none; background: #f3f3f3; display: grid; grid-template-columns: 180px 171px 1fr; }
  .data { background: #fff; border: 1px solid #d4d4d4; border-left: 0; height: 492px; color: #222; }
  .dtabs { display: flex; height: 24px; font-size: 12.5px; line-height: 24px; }
  .on { width: 71px; padding-left: 11px; }
  .off { flex: 1; background: #f7f7f7; border-left: 1px solid #d4d4d4; border-bottom: 1px solid #d4d4d4; display: flex; align-items: center; padding-left: 11px; gap: 33px; }
  .source { height: 30px; border-bottom: 1px solid #d4d4d4; display: flex; align-items: center; gap: 5px; padding: 0 0 2px 5px; }
  .searchrow { display: flex; align-items: center; height: 43px; padding-left: 5px; }
  .search { width: 117px; height: 21px; border: 1px solid #bbb; display: flex; align-items: center; gap: 9px; padding-left: 5px; margin-right: 6px; color: #666; font-size: 11.5px; }
  .searchrow u { width: 1px; height: 20px; background: #d4d4d4; margin: 0 10px 0 6px; }
  .tables { height: 15px; padding-left: 17px; font-size: 12px; line-height: 14px; }
  .list { font-weight: 500; }
  .trow { height: 24.4px; display: grid; grid-template-columns: 11px 26px 1fr; align-items: center; padding-left: 9px; }
  .mrow { height: 19.5px; display: grid; grid-template-columns: 29px 1fr; align-items: center; padding-left: 17px; }
  .mrow.names-row { height: 24px; border-bottom: 1px solid #ccc; margin: 0 6px 0 16px; padding-left: 2px; grid-template-columns: 28px 1fr; }
  .abc { color: #4996b2; font-size: 9px; }
  .it { font-style: italic; }

  .cards { padding: 0 5px; display: flex; flex-direction: column; gap: 5px; }
  .card { border: 1px solid #d4d4d4; background: #fafafa; height: 42px; flex: none; padding: 4px 6px; }
  .card:first-child { padding-top: 3px; }
  .card.big { height: 234px; margin-top: 1px; padding-top: 3px; }
  .ch { display: flex; align-items: center; gap: 5px; font-size: 11.5px; height: 15px; padding-left: 2px; }
  .select { margin-top: 8px; height: 21px; border: 1px solid #aaa; display: flex; align-items: center; gap: 6px; padding-left: 5px; color: #666; }
  .select i { margin-left: auto; width: 16px; height: 100%; border-left: 1px solid #d4d4d4; display: grid; place-items: center; }
  .btns { display: grid; grid-template-columns: repeat(3, 45px); gap: 6px; margin-top: 5px; }
  .btns > div { height: 45px; border: 1px solid #d4d4d4; display: flex; flex-direction: column; align-items: center; gap: 2px; padding: 8px 1px 0 0; }
  .pills { display: grid; grid-template-columns: 20px 124px; column-gap: 3px; row-gap: 2.4px; margin-top: 11px; align-items: center; }
  .pills > :global(svg) { margin-left: 3px; }
  .pill { height: 18px; border-radius: 9px; background: #4996b2; color: #fff; line-height: 18px; padding-left: 10px; }
  .pill.green { width: 135px; background: #00b180; }

  section { display: flex; flex-direction: column; padding-right: 5px; }
  .shelf { height: 25px; border: 1px solid #d4d4d4; background: #fafafa; display: flex; align-items: center; gap: 5px; margin-bottom: 6px; flex: none; }
  .sl { width: 77px; height: 100%; border-right: 1px solid #d4d4d4; display: flex; align-items: center; gap: 5px; padding: 0 0 2px 5px; font-size: 11.5px; }
  .viewrow { display: flex; gap: 5px; align-items: flex-start; margin-top: -1px; }
  .view { width: 858px; height: 425px; border: 1px solid #d4d4d4; background: #fff; padding: 0 4px; }
  .vtitle { height: 42px; padding: 10px 0 0 3px; font: 300 18px/22px "Open Sans", "Noto Sans", sans-serif; color: #222; }
  .map { width: 848px; height: 377px; display: grid; overflow: hidden; border-top: 1px solid #ddd; }
  .map > * { grid-area: 1 / 1; }
  .mapsvg { width: 848px; height: 376px; }
  .credit { align-self: end; justify-self: start; width: 168px; height: 13px; background: #24263a; color: #fff; display: flex; gap: 4px; padding-left: 2px; font-size: 10px; line-height: 13px; font-weight: 500; }
  .thin path { fill: none; stroke: #353535; stroke-width: 2.6; }
  .thick path { fill: none; stroke: #5c5c5c; stroke-width: 4.8; stroke-linejoin: round; }
  .names text { font-family: "Noto Sans", "Open Sans", sans-serif; font-weight: 600; fill: #8c8c8c; stroke: #0b0b0b; stroke-width: 5; paint-order: stroke; }
  .legend { width: 146px; height: 168px; border: 1px solid #d4d4d4; background: #fff; padding: 5px 0 0 3px; }
  .legend > .t { display: block; width: max-content; height: 15px; }
  .lrow { height: 18px; display: flex; align-items: center; gap: 5px; padding-left: 2px; font: 300 12px/18px "Open Sans", sans-serif; color: #222; }

  .sheets { height: 28px; flex: none; background: #e6e6e6; border-top: 1px solid #c9c9c9; border-bottom: 1px solid #c9c9c9; display: grid;
    grid-template-columns: 114px 180px 158px 161px 164px 115px 156px 162px 28px 29px 29px 1fr; color: #6a6a6a; }
  .sheet { border-right: 1px solid #c9c9c9; padding: 3px 0 0 6px; overflow: hidden; display: flex; gap: 6px; line-height: 15px; min-width: 0; }
  .sheet:first-child { padding-left: 9px; }
  .sheet:nth-child(n + 6) { padding-left: 7px; }
  .sheet:nth-child(8) { padding-left: 6px; border-right-width: 0; box-shadow: inset -1px 0 #c9c9c9; }
  .sheet:first-child svg { margin-top: 3px; }
  .sheet.cur { background: #fcfcfc; color: #222; }
  .nb { border-right: 1px solid #c9c9c9; display: grid; place-items: center; padding-left: 1px; }
  .nb svg { fill: none; stroke: #666; }
  .nb .b { stroke-width: 1.8; }
  .nav2 { display: flex; align-items: center; padding-left: 8px; gap: 18px; }
  .status { height: 15px; background: #ebebeb; flex: none; display: flex; gap: 10px; padding-left: 9px; font-size: 9.5px; line-height: 15px; }

  footer { height: 40px; flex: none; background: #101010; display: grid; align-items: center; color: #fff; font-family: "Open Sans", "Noto Sans", sans-serif;
    grid-template-columns: 48px 344px 48px 53px 48px 48px 49px 49px 49px 1fr; }
  .start { display: grid; place-items: center; }
  .find { height: 40px; background: #3f3f3f; display: flex; align-items: center; gap: 9px; padding-left: 9px; font-size: 14.5px; line-height: 18px; color: #b9b9b9; }
  .find .t { padding-top: 1px; }
  .mic { margin-left: auto; margin-right: 15px; }
  .app-i { height: 40px; width: 48px; display: grid; place-items: center; }
  .app-i:nth-child(4) { width: 54px; }
  .app-i:nth-child(5) { width: 46px; }
  .act { background: #333; border-bottom: 2px solid #ef6bd8; grid-template-areas: "a"; }
  .act > * { grid-area: a; }
  .act > :global(*) { grid-area: a; }
  .badge { transform: translate(6px, 5px); }
  .run { padding-top: 2px; width: 40px; justify-self: center; border-bottom: 2px solid #ef6bd8; }
  .dev { width: 22px; height: 22px; background: linear-gradient(#5f78b8, #244c95 50%, #0b5fd0); font: bold 9.5px/11px "Liberation Sans", sans-serif; text-align: center; overflow: hidden; }
  .dev b { display: block; }
  .dev .cpp { color: #082a66; }
  .tray { justify-self: end; width: 225px; height: 40px; display: grid; grid-template-columns: 22px 27px 23px 35px 77px 1fr; align-items: center; font-size: 11.5px; line-height: 16px; background: linear-gradient(#555, #555) 220px 0 / 1px 40px no-repeat; }
  .clock { display: flex; flex-direction: column; align-items: center; width: 60px; gap: 2px; padding-bottom: 1px; }
</style>
